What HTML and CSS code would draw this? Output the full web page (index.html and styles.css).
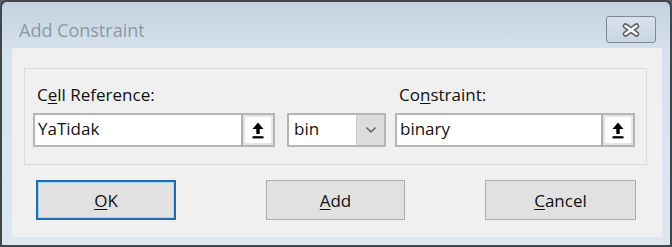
FILE: index.html
```html
<!DOCTYPE html>
<html lang="en">
<head>
    <meta charset="UTF-8">
    <title>Add Constraint</title>
    <link rel="stylesheet" href="styles.css">
</head>
<body>
    <div class="window">
        <div class="titlebar">
            <span class="title">Add Constraint</span>
            <button class="close-btn" aria-label="Close">
                <svg width="18" height="14" viewBox="0 0 18 14">
                    <path d="M3.5 3 L14.5 11 M14.5 3 L3.5 11" stroke="#555b63" stroke-width="5.5" stroke-linecap="round"/>
                    <path d="M3.5 3 L14.5 11 M14.5 3 L3.5 11" stroke="#ffffff" stroke-width="2.6" stroke-linecap="round"/>
                </svg>
            </button>
        </div>

        <div class="client">
            <div class="group">
                <div class="col col-ref">
                    <label class="label">C<u>e</u>ll Reference:</label>
                    <div class="field">
                        <span class="field-text">YaTidak</span>
                        <span class="pick-btn">
                            <svg width="12" height="17" viewBox="0 0 12 17">
                                <path d="M6 0.5 L11.5 7 L7.7 7 L7.7 12 L4.3 12 L4.3 7 L0.5 7 Z" fill="#000"/>
                                <rect x="0.5" y="14.2" width="11" height="2.2" fill="#000"/>
                            </svg>
                        </span>
                    </div>
                </div>

                <div class="col col-op">
                    <div class="field select">
                        <span class="field-text">bin</span>
                        <span class="drop-btn">
                            <svg width="12" height="8" viewBox="0 0 12 8">
                                <path d="M1.5 1.5 L6 6 L10.5 1.5" fill="none" stroke="#5a5a5a" stroke-width="1.4"/>
                            </svg>
                        </span>
                    </div>
                </div>

                <div class="col col-con">
                    <label class="label">Co<u>n</u>straint:</label>
                    <div class="field">
                        <span class="field-text">binary</span>
                        <span class="pick-btn">
                            <svg width="12" height="17" viewBox="0 0 12 17">
                                <path d="M6 0.5 L11.5 7 L7.7 7 L7.7 12 L4.3 12 L4.3 7 L0.5 7 Z" fill="#000"/>
                                <rect x="0.5" y="14.2" width="11" height="2.2" fill="#000"/>
                            </svg>
                        </span>
                    </div>
                </div>
            </div>

            <div class="actions">
                <button class="btn btn-default"><u>O</u>K</button>
                <button class="btn btn-add"><u>A</u>dd</button>
                <button class="btn btn-cancel"><u>C</u>ancel</button>
            </div>
        </div>
    </div>
</body>
</html>
```

FILE: styles.css
```css
/* Basic reset */
* {
    box-sizing: border-box;
    margin: 0;
    padding: 0;
}
body {
    font-family: 'Open Sans', 'Noto Sans', sans-serif;
    background-color: #5a6068;
    width: 672px;
    height: 247px;
    overflow: hidden;
}
u {
    text-decoration-thickness: 1px;
    text-underline-offset: 2px;
}

/* Window frame */
.window {
    width: 672px;
    height: 247px;
    border: 2px solid #41464d;
    border-radius: 7px 7px 0 0;
    background: linear-gradient(#c4d2df, #d6e2ed 50px, #dce7f2);
    padding: 0 8px 8px 10px;
    display: flex;
    flex-direction: column;
}
.titlebar {
    height: 46px;
    padding: 14px 6px 0 7px;
    display: flex;
    align-items: flex-start;
    justify-content: space-between;
}
.title {
    font-size: 18px;
    line-height: 29px;
    color: #8c98a4;
}
.close-btn {
    width: 50px;
    height: 27px;
    border: 1px solid #7d8996;
    border-radius: 3px;
    background: linear-gradient(#d8e2ec, #c9d5e1);
    display: flex;
    align-items: center;
    justify-content: center;
}

/* Client area */
.client {
    flex: 1;
    background-color: #f0f0f0;
    padding: 20px 15px 0 12px;
    display: flex;
    flex-direction: column;
}
.group {
    height: 97px;
    border: 1px solid #dadada;
    padding: 0 0 0 8px;
    display: flex;
    align-items: flex-end;
    padding-bottom: 17px;
}
.col {
    display: flex;
    flex-direction: column;
}
.col-ref {
    width: 242px;
}
.col-op {
    width: 99px;
    margin-left: 12px;
}
.col-con {
    width: 240px;
    margin-left: 9px;
}
.label {
    font-size: 17px;
    line-height: 23px;
    color: #111;
    padding-left: 4px;
    margin-bottom: 7px;
}

/* Inputs */
.field {
    height: 34px;
    border: 2px solid #b5b5b5;
    background: #fff;
    display: flex;
    align-items: stretch;
}
.field-text {
    flex: 1;
    font-size: 17px;
    line-height: 28px;
    color: #111;
    padding-left: 3px;
}
.pick-btn {
    width: 32px;
    background: #fff;
    border-left: 2px solid #b0b0b0;
    box-shadow: inset 0 0 0 2px #e4e4e4;
    display: flex;
    align-items: center;
    justify-content: center;
}
.pick-btn svg {
    margin-top: 1px;
}
.select .field-text {
    padding-left: 5px;
}
.drop-btn {
    width: 28px;
    background: #dcdcdc;
    border-left: 1px solid #c8c8c8;
    display: flex;
    align-items: center;
    justify-content: center;
}

/* Buttons */
.actions {
    display: flex;
    margin-top: 15px;
    padding-left: 12px;
}
.btn {
    height: 40px;
    font-family: inherit;
    font-size: 17px;
    color: #111;
    background-color: #e1e1e1;
    border: 1px solid #adadad;
}
.btn-default {
    width: 140px;
    border: 2px solid #1e6cb4;
    box-shadow: inset 0 0 0 1px #a8d8f5;
}
.btn-add {
    width: 139px;
    margin-left: 90px;
}
.btn-cancel {
    width: 151px;
    margin-left: 80px;
}
```
